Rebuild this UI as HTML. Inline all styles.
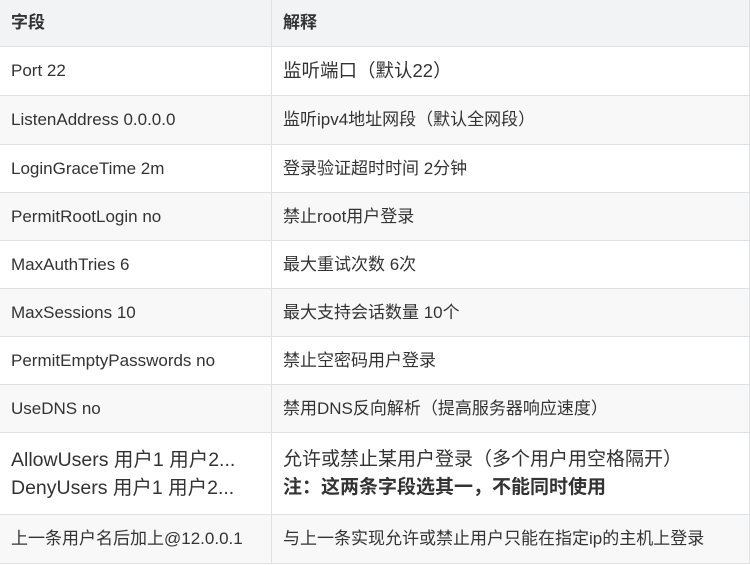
<html><head><style>
body{margin:0;width:750px;height:565px;overflow:hidden;background:#fff;font-family:"Liberation Sans","Noto Sans CJK SC",sans-serif;color:#333}
table{border-collapse:collapse;width:751px;position:absolute;left:-1px;top:-1px}
td,th{border:1px solid #dfe2e5;padding:0 0 0 11px;text-align:left;font-size:17px;line-height:22px;vertical-align:middle}
th{background:#f2f3f5;font-weight:bold;height:47px;font-size:17px}
td:first-child,th:first-child{width:260px}
tr.g td{background:#f8f8f8}
</style></head><body>
<table>
<tr><th>字段</th><th>解释</th></tr>
<tr style="height:49px"><td>Port 22</td><td style="font-size:18.5px">监听端口（默认22）</td></tr>
<tr class="g" style="height:49px"><td>ListenAddress 0.0.0.0</td><td>监听ipv4地址网段（默认全网段）</td></tr>
<tr style="height:48px"><td>LoginGraceTime 2m</td><td>登录验证超时时间 2分钟</td></tr>
<tr class="g" style="height:48px"><td>PermitRootLogin no</td><td>禁止root用户登录</td></tr>
<tr style="height:48px"><td>MaxAuthTries 6</td><td>最大重试次数 6次</td></tr>
<tr class="g" style="height:48px"><td>MaxSessions 10</td><td>最大支持会话数量 10个</td></tr>
<tr style="height:48px"><td>PermitEmptyPasswords no</td><td>禁止空密码用户登录</td></tr>
<tr class="g" style="height:48px"><td>UseDNS no</td><td>禁用DNS反向解析（提高服务器响应速度）</td></tr>
<tr style="height:82px"><td style="font-size:19.5px;line-height:28px">AllowUsers 用户1 用户2...<br>DenyUsers 用户1 用户2...</td><td style="font-size:19px;line-height:28px">允许或禁止某用户登录（多个用户用空格隔开）<br><b>注：这两条字段选其一，不能同时使用</b></td></tr>
<tr class="g" style="height:49px"><td>上一条用户名后加上@12.0.0.1</td><td>与上一条实现允许或禁止用户只能在指定ip的主机上登录</td></tr>
</table>
</body></html>
